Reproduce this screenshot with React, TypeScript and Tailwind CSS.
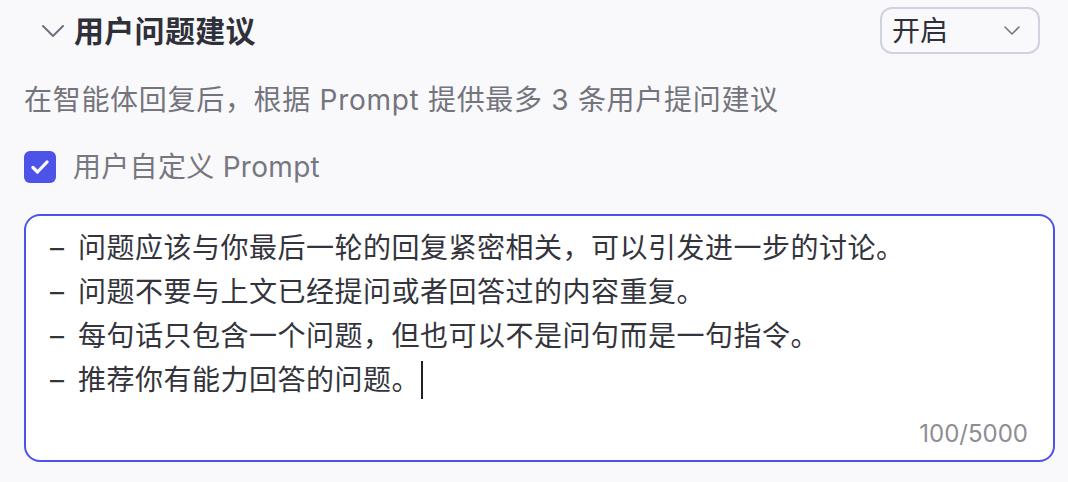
import React from "react";

const font = { fontFamily: 'Inter, "Noto Sans CJK SC", sans-serif' };

export default function App() {
  const lines = [
    "问题应该与你最后一轮的回复紧密相关，可以引发进一步的讨论。",
    "问题不要与上文已经提问或者回答过的内容重复。",
    "每句话只包含一个问题，但也可以不是问句而是一句指令。",
  ];
  return (
    <div
      className="w-[1068px] h-[482px] bg-[#f9f9fc] flex flex-col pl-[24px] pr-[13px] overflow-hidden"
      style={font}
    >
      {/* header */}
      <div className="mt-[7px] h-[47px] flex items-center justify-between pr-[15px]">
        <div className="flex items-center">
          <svg width="22" height="12" viewBox="0 0 22 12" className="ml-[18px]" fill="none">
            <path d="M1 1 L11 11 L21 1" stroke="#6f7180" strokeWidth="2" strokeLinecap="round" strokeLinejoin="round" />
          </svg>
          <span className="ml-[10px] text-[30px] leading-[40px] font-bold tracking-[0.3px] text-[#2f3039]">用户问题建议</span>
        </div>
        <div className="w-[160px] h-[47px] rounded-[12px] border-2 border-[#d0d2e0] flex items-center justify-between pl-[10px] pr-[18px]">
          <span className="text-[28px] leading-[40px] text-[#2f3039]">开启</span>
          <svg width="16" height="9" viewBox="0 0 16 9" fill="none">
            <path d="M1 1 L8 8 L15 1" stroke="#757783" strokeWidth="1.6" strokeLinecap="round" strokeLinejoin="round" />
          </svg>
        </div>
      </div>

      {/* description */}
      <div className="mt-[26px] text-[28px] leading-[40px] tracking-[0.7px] text-[#74747c]">
        在智能体回复后，根据 Prompt 提供最多 3 条用户提问建议
      </div>

      {/* checkbox */}
      <div className="mt-[31px] h-[32px] flex items-center">
        <div className="w-[32px] h-[32px] rounded-[6px] bg-[#4d53e8] flex items-center justify-center">
          <svg width="18" height="14" viewBox="0 0 18 14" fill="none">
            <path d="M2 7.5 L6.5 12 L16 2" stroke="#ffffff" strokeWidth="3.2" strokeLinecap="round" strokeLinejoin="round" />
          </svg>
        </div>
        <span className="ml-[17px] text-[28px] leading-[40px] tracking-[0.3px] text-[#77777f]">用户自定义 Prompt</span>
      </div>

      {/* textarea */}
      <div className="mt-[31px] h-[248px] rounded-[16px] border-2 border-[#4d53e8] bg-white flex flex-col pl-[24px] pr-[25px] pt-[10px] pb-[10px]">
        <div className="flex-1 text-[28px] leading-[44px] text-[#33343c]">
          {lines.map((l) => (
            <div key={l} className="flex">
              <span className="w-[28px] shrink-0">–</span>
              <span className="tracking-[0.5px]">{l}</span>
            </div>
          ))}
          <div className="flex items-center">
            <span className="w-[28px] shrink-0">–</span>
            <span className="tracking-[0.5px]">推荐你有能力回答的问题。</span>
            <span className="ml-[1px] inline-block w-[2px] h-[38px] bg-[#1f2029]" />
          </div>
        </div>
        <div className="text-right text-[24px] leading-[32px] text-[#8d8d94]">100/5000</div>
      </div>
    </div>
  );
}
